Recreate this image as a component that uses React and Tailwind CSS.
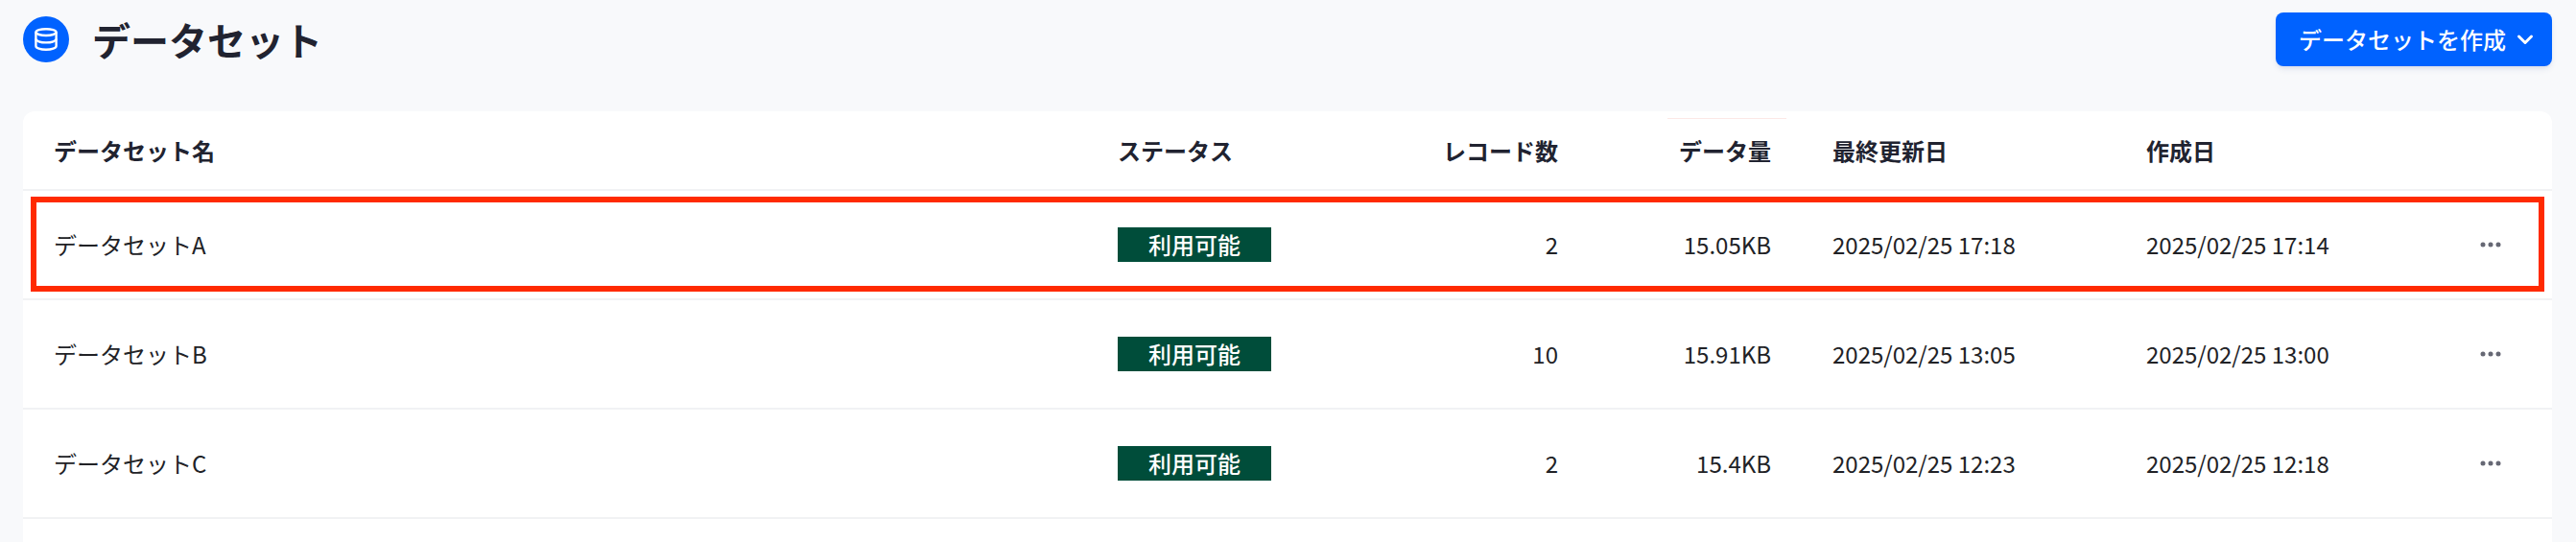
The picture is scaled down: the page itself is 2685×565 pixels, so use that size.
import { useState } from 'react';

const initialDatasets = [
  { id: 1, name: 'データセットA', status: '利用可能', records: 2, size: '15.05KB', updatedAt: '2025/02/25 17:18', createdAt: '2025/02/25 17:14' },
  { id: 2, name: 'データセットB', status: '利用可能', records: 10, size: '15.91KB', updatedAt: '2025/02/25 13:05', createdAt: '2025/02/25 13:00' },
  { id: 3, name: 'データセットC', status: '利用可能', records: 2, size: '15.4KB', updatedAt: '2025/02/25 12:23', createdAt: '2025/02/25 12:18' },
];

const DatabaseIcon = () => (
  <svg viewBox="0 0 24 24" className="w-6 h-6" fill="none" stroke="currentColor" strokeWidth="2.4" aria-hidden="true">
    <ellipse cx="12" cy="4.6" rx="10.6" ry="3.4" />
    <path d="M1.4 4.6v14.4c0 2.1 4.7 3.8 10.6 3.8s10.6-1.7 10.6-3.8V4.6" />
    <path d="M1.4 11.6c0 2.1 4.7 3.8 10.6 3.8s10.6-1.7 10.6-3.8" />
  </svg>
);

const ChevronIcon = () => (
  <svg viewBox="0 0 24 24" className="w-6 h-6" fill="none" stroke="currentColor" strokeWidth="3" strokeLinecap="round" strokeLinejoin="round" aria-hidden="true">
    <path d="M5.5 9l6.5 6.5L18.500 9" />
  </svg>
);

const MoreIcon = () => (
  <svg viewBox="0 0 24 24" className="w-6 h-6" fill="currentColor" aria-hidden="true">
    <circle cx="4" cy="12" r="2.5" />
    <circle cx="12" cy="12" r="2.5" />
    <circle cx="20" cy="12" r="2.5" />
  </svg>
);

const App = () => {
  const [datasets] = useState(initialDatasets);
  const [selectedId, setSelectedId] = useState(1);

  return (
    <div className="min-h-screen flex flex-col bg-[#f8f9fb] pl-6 pr-[25px] pt-[13px] text-2xl text-[#212226] font-['Noto_Sans_CJK_JP',sans-serif]">
      <header className="flex items-center justify-between h-14">
        <div className="flex items-center gap-6">
          <div className="flex items-center justify-center w-12 h-12 rounded-full bg-[#0062ff] text-white">
            <DatabaseIcon />
          </div>
          <h1 className="text-[40px] leading-[56px] font-bold text-[#212330]">データセット</h1>
        </div>
        <button
          type="button"
          className="flex items-center gap-2 h-14 pl-6 pr-4 rounded-lg bg-[#0062ff] text-white font-medium whitespace-nowrap shadow-md shadow-blue-900/10"
        >
          データセットを作成
          <ChevronIcon />
        </button>
      </header>

      <main className="flex-1 mt-[47px] bg-white rounded-t-xl">
        <table className="w-full table-fixed border-separate border-spacing-0 text-left">
          <thead>
            <tr className="h-[83px] text-[#212330]">
              <th className="px-8 font-bold border-b-2 border-[#f1f2f4]">データセット名</th>
              <th className="w-[339px] px-8 font-bold border-b-2 border-[#f1f2f4]">ステータス</th>
              <th className="w-[184px] px-8 font-bold text-right border-b-2 border-[#f1f2f4]">レコード数</th>
              <th className="relative w-[222px] px-8 font-bold text-right border-b-2 border-[#f1f2f4]">
                データ量
                <span className="absolute top-[7px] right-4 w-[124px] h-px bg-[#fce8e6]"></span>
              </th>
              <th className="w-[327px] px-8 font-bold border-b-2 border-[#f1f2f4]">最終更新日</th>
              <th className="w-[327px] px-8 font-bold border-b-2 border-[#f1f2f4]">作成日</th>
              <td className="w-32 border-b-2 border-[#f1f2f4]"></td>
            </tr>
          </thead>
          <tbody>
            {datasets.map((dataset) => (
              <tr key={dataset.id} className="relative h-[114px]" onClick={() => setSelectedId(dataset.id)}>
                <td className="px-8 border-b-2 border-[#f1f2f4]">
                  {dataset.name}
                  {selectedId === dataset.id && (
                    <span className="absolute inset-x-2 top-1.5 bottom-[9px] border-6 border-[#ff2a00] pointer-events-none"></span>
                  )}
                </td>
                <td className="px-8 border-b-2 border-[#f1f2f4]">
                  <span className="flex items-center justify-center w-40 h-9 bg-[#004d3a] text-white font-medium">
                    {dataset.status}
                  </span>
                </td>
                <td className="px-8 text-right border-b-2 border-[#f1f2f4]">{dataset.records}</td>
                <td className="px-8 text-right border-b-2 border-[#f1f2f4]">{dataset.size}</td>
                <td className="px-8 whitespace-nowrap border-b-2 border-[#f1f2f4]">{dataset.updatedAt}</td>
                <td className="px-8 whitespace-nowrap border-b-2 border-[#f1f2f4]">{dataset.createdAt}</td>
                <td className="border-b-2 border-[#f1f2f4]">
                  <button
                    type="button"
                    aria-label={`${dataset.name}のメニュー`}
                    className="flex items-center justify-center w-12 h-12 mx-auto text-[#666874]"
                  >
                    <MoreIcon />
                  </button>
                </td>
              </tr>
            ))}
          </tbody>
        </table>
      </main>
    </div>
  );
};

export default App;
